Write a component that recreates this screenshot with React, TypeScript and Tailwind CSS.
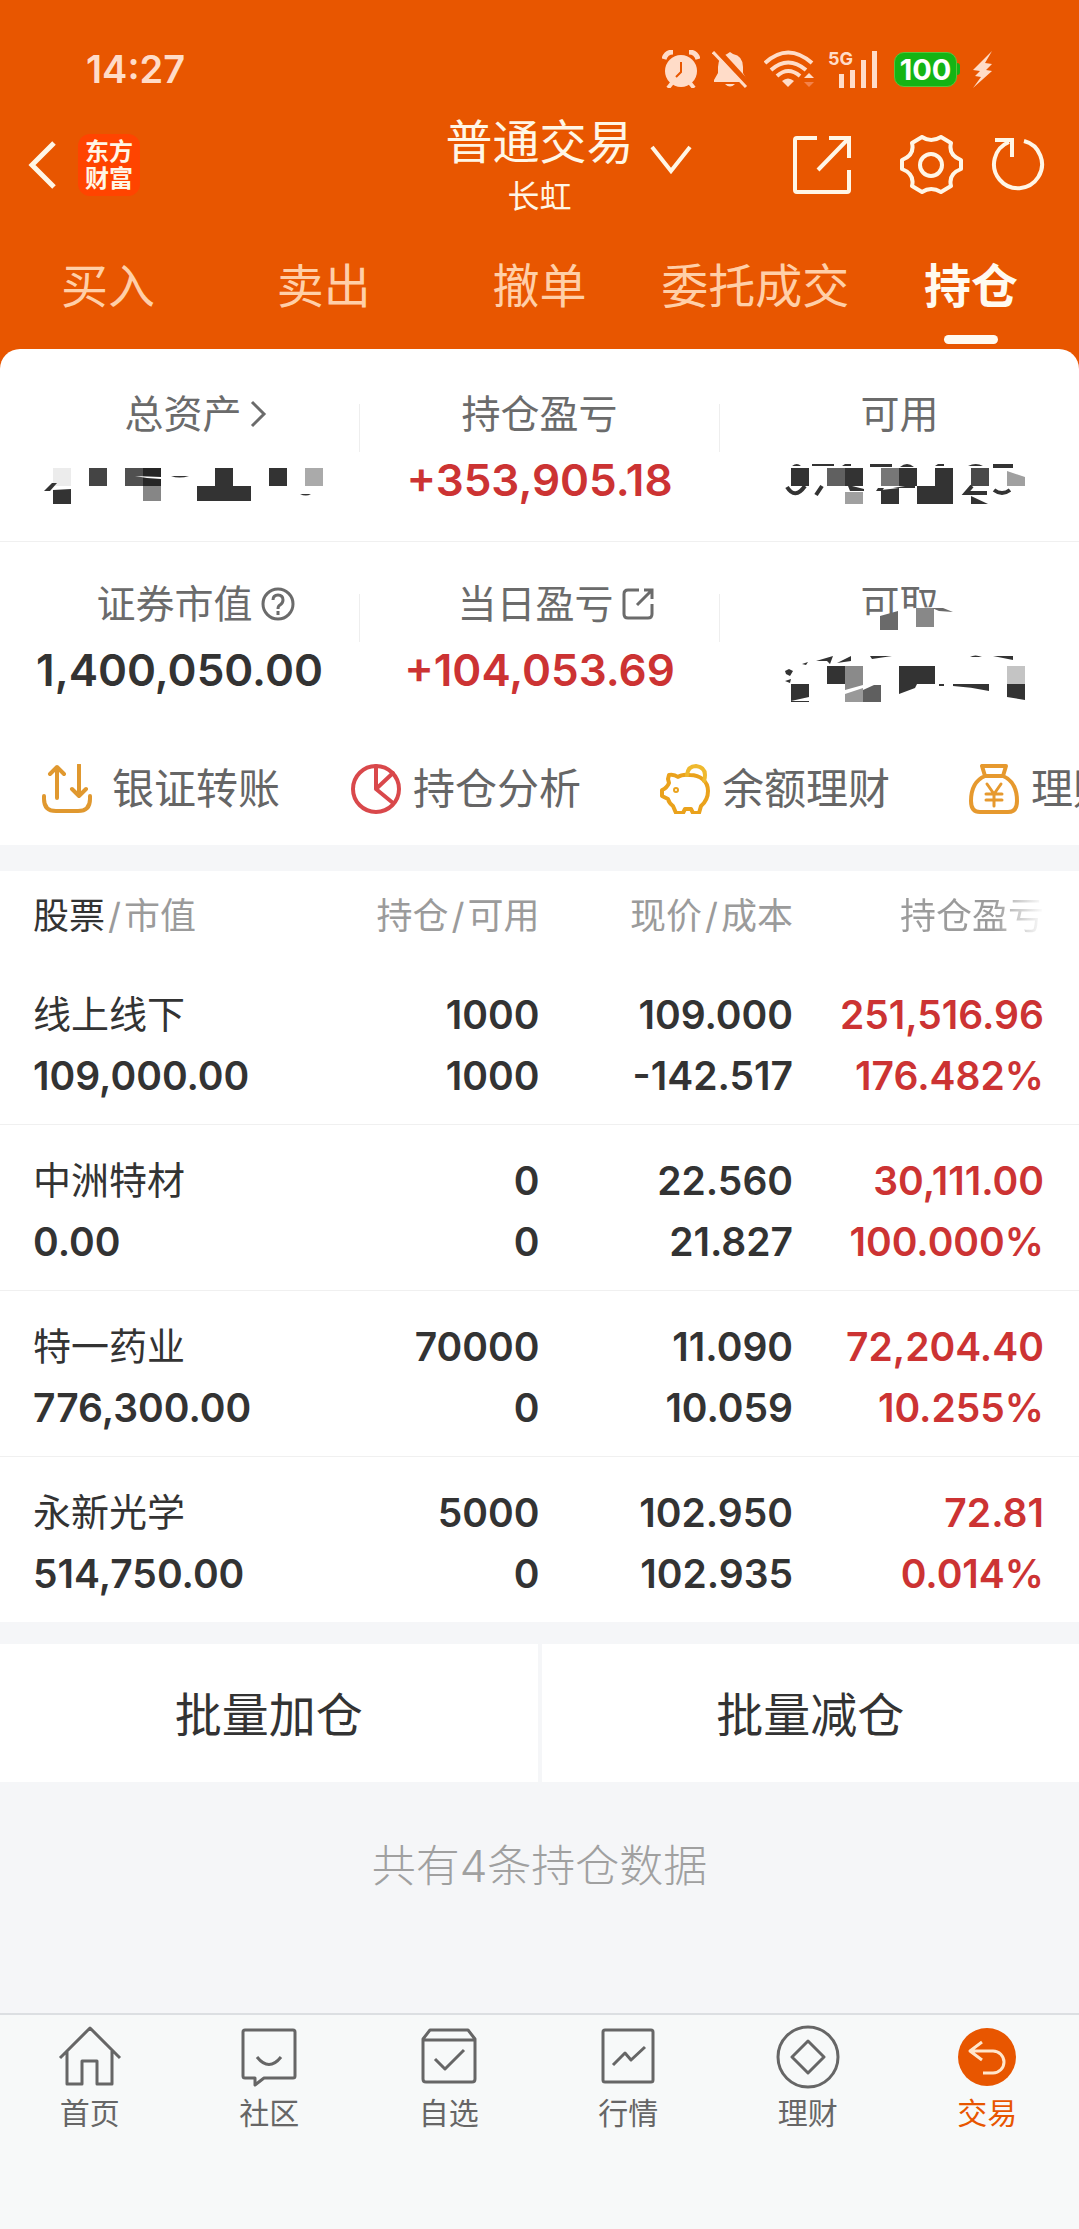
import { useState, type ReactNode } from 'react';
import { clsx } from 'clsx';

const TABS = ['买入', '卖出', '撤单', '委托成交', '持仓'];

const HOLDINGS = [
  { name: '线上线下', value: '109,000.00', qty: '1000', free: '1000', price: '109.000', cost: '-142.517', pnl: '251,516.96', pct: '176.482%' },
  { name: '中洲特材', value: '0.00', qty: '0', free: '0', price: '22.560', cost: '21.827', pnl: '30,111.00', pct: '100.000%' },
  { name: '特一药业', value: '776,300.00', qty: '70000', free: '0', price: '11.090', cost: '10.059', pnl: '72,204.40', pct: '10.255%' },
  { name: '永新光学', value: '514,750.00', qty: '5000', free: '0', price: '102.950', cost: '102.935', pnl: '72.81', pct: '0.014%' },
];

function StatusBar() {
  return (
    <div className="flex h-24 items-center pt-[42px] pr-[86px] pl-[86px] text-[#ffdcc8]">
      <span className="mr-auto text-[38px] leading-none font-semibold">14:27</span>
      <svg width="38" height="38" viewBox="0 0 38 38" fill="currentColor">
        <circle cx="19" cy="21" r="16" />
        <path d="M2 9Q4 2 11 2M36 9Q34 2 27 2" stroke="currentColor" strokeWidth="5" fill="none" />
        <path d="M10 33l-4 5M28 33l4 5" stroke="currentColor" strokeWidth="4" fill="none" />
        <path d="M19 12v10l-5 5" stroke="#e85600" strokeWidth="2" fill="none" />
      </svg>
      <svg className="ml-3" width="36" height="37" viewBox="0 0 36 37" fill="currentColor">
        <path d="M18 1l3 2q10 2 10 13v6l4 7v2H2v-2l4-7v-6Q6 6 15 3zM13 33h10q-5 5-10 0z" />
        <path d="M4-2l34 37" stroke="#e85600" strokeWidth="6" />
        <path d="M1 1l33 35" stroke="currentColor" strokeWidth="3" />
      </svg>
      <svg className="ml-4" width="52" height="38" viewBox="0 0 52 38" fill="none" stroke="currentColor" strokeWidth="4">
        <path d="M1 13Q24-8 48 13M7 20q17-15 35 0M13 26q11-10 23 0" />
        <path d="M24 37l-6-6q6-5 12 0z" fill="currentColor" stroke="none" />
        <path d="M40 28l5-5 5 5z" fill="currentColor" stroke="none" />
        <path d="M40 32h10l-5 5z" fill="#f4824a" stroke="none" />
      </svg>
      <div className="relative ml-3 h-[38px] w-[50px]">
        <span className="absolute top-0 left-0 text-[18px] leading-[18px] font-bold">5G</span>
        <svg className="absolute right-0 bottom-0" width="40" height="38" viewBox="0 0 40 38" fill="currentColor">
          <path d="M1 24h5v14H1zM12 20h5v18h-5zM23 10h5v28h-5zM34 1h5v37h-5z" />
        </svg>
      </div>
      <div className="ml-4 flex items-center">
        <span className="h-[35px] w-[63px] rounded-[10px] border border-[#5ac43a] bg-[#14b414] text-center text-[29px] leading-[33px] font-bold text-white">100</span>
        <span className="h-3 w-[3px] rounded-r bg-[#14b414]" />
      </div>
      <svg className="ml-3" width="21" height="37" viewBox="0 0 21 37" fill="currentColor">
        <path d="M20 0L1 19l7 1-5 5 6 1L1 37l19-17-6-1 6-6-7-1z" />
      </svg>
    </div>
  );
}

function TitleBar() {
  return (
    <div className="grid h-[138px] grid-cols-[1fr_auto_1fr] items-center text-[#fff6e6]">
      <div className="flex items-center gap-[22px] pl-7">
        <button type="button" aria-label="返回">
          <svg width="28" height="48" viewBox="0 0 28 48" fill="none" stroke="currentColor" strokeWidth="5">
            <path d="M26 2L4 24l22 22" />
          </svg>
        </button>
        <a href="#home" className="flex h-[62px] w-[62px] flex-col items-center justify-center rounded-xl bg-[#ff4400] text-[24px] leading-[27px] font-bold">
          <span>东方</span>
          <span>财富</span>
        </a>
      </div>
      <button type="button" className="relative pt-2.5">
        <span className="block text-[47px] leading-[54px]">普通交易</span>
        <span className="block text-[32px] leading-[56px]">长虹</span>
        <svg className="absolute top-10 left-full ml-4" width="42" height="30" viewBox="0 0 42 30" fill="none" stroke="currentColor" strokeWidth="4">
          <path d="M2 2l19 24L40 2" />
        </svg>
      </button>
      <div className="flex items-center justify-end pr-[34px]">
        <button type="button" aria-label="分享">
          <svg width="60" height="60" viewBox="0 0 60 60" fill="none" stroke="currentColor" strokeWidth="4">
            <path d="M25 3H5q-2 0-2 2v50q0 2 2 2h50q2 0 2-2V35M37 3h20v20M57 3L26 35" />
          </svg>
        </button>
        <button type="button" aria-label="设置" className="ml-12">
          <svg width="63" height="60" viewBox="-1 0 63 60" fill="none" stroke="currentColor" strokeWidth="4" strokeLinejoin="round">
            <path d="M21 2Q30 8 40 2L50 8Q47 20 60 25V34Q47 39 50 51L40 57Q30 51 21 57L11 51Q14 39 1 34V25Q14 20 11 8Z" />
            <circle cx="30" cy="30" r="11" />
          </svg>
        </button>
        <button type="button" aria-label="刷新" className="ml-7">
          <svg width="54" height="56" viewBox="0 0 54 56" fill="none" stroke="currentColor" strokeWidth="4">
            <path d="M33 4A24 24 0 1 1 18 5M4 3h17v17" />
          </svg>
        </button>
      </div>
    </div>
  );
}

function Stat({ label, value, red }: { label: ReactNode; value: ReactNode; red?: boolean }) {
  return (
    <div className="flex flex-col items-center">
      <div className="flex h-[60px] items-center text-[39px] leading-[60px] text-[#6b6b6b]">{label}</div>
      <div className={clsx('flex h-[72px] items-center text-[44px] font-semibold', red ? 'text-[#cc3333]' : 'text-[#333333]')}>{value}</div>
    </div>
  );
}

const StatDivider = () => <span className="mt-5 h-12 w-px bg-[#eeeeee]" />;

// Мозаїка поверх прихованих сум, клітинка 18px
function MosaicAssets() {
  return (
    <svg width="288" height="48" viewBox="36 456 288 48" fill="#333333">
      <path d="M53 468h18v18H53z" fill="#ececec" />
      <path d="M53 490l18-1v15H53zM44 491l8-8h5l-7 8z" />
      <path d="M89 468h18v18H89z" fill="#444444" />
      <path d="M125 468h18v18h-18z" fill="#505050" />
      <path d="M143 468h18v18h-18z" fill="#262626" />
      <path d="M143 486h18v15h-18z" fill="#868686" />
      <path d="M135 476l26 1v2l-14-1z" fill="#ffffff" />
      <path d="M171 476h18q-10 3-18 0zM300 494h11q-5 3-11 0z" />
      <path d="M215 468h18v18h18v15h-54v-15h18zM269 468h18v18h-18z" />
      <path d="M305 468h18v18h-18z" fill="#aaaaaa" />
    </svg>
  );
}

function MosaicAvailable() {
  return (
    <svg width="252" height="48" viewBox="774 456 252 48" fill="#333333">
      <path d="M791 468h18v18h-18zM845 468h18v18h-18zM899 468h18v18h-18zM935 468h18v36h-36v-18h18zM881 490l18-2v16h-18zM971 496l17 8h-17z" />
      <path d="M827 468h18v18h-18z" fill="#606060" />
      <path d="M881 468h18v18h-18z" fill="#777777" />
      <path d="M971 468h18v18h-18z" fill="#4a4a4a" />
      <path d="M845 492h18v12h-18zM1007 471l18 6v9h-18z" fill="#a0a0a0" />
      <path d="M792 466q5-4 9 0zM812 464h22v2h-22zM842 466l3-2h6v2zM870 464h22v3h-22zM900 467q7-6 14 0zM935 466l3-2h6v2zM968 466q8-4 15 0zM993 464h20v4h-20zM876 491l2-3h6l-2 3zM848 486l2 5h14v-2l-12-3zM893 488l12-2h10v2z" />
      <path d="M787 487q8 13 18-1M816 495l6-9M972 486l-6 7h21M994 490q8 6 16 0" fill="none" stroke="#333333" strokeWidth="4" />
    </svg>
  );
}

function MosaicWithdrawable() {
  return (
    <svg width="252" height="68" viewBox="774 636 252 68" fill="#333333">
      <path d="M827 666h18v18h-18zM791 684h18v13l-18 4zM899 666h36v18h-18l-2 4-16 6zM953 684h36v7q-18-4-36-5zM1007 684h18v16l-18-3z" />
      <path d="M845 666h18v19l-18 5z" fill="#8a8a8a" />
      <path d="M845 694l18-6v14h-18z" fill="#999999" />
      <path d="M863 690l11-5h7v17h-18z" fill="#5f5f5f" />
      <path d="M1007 666h18v18h-18z" fill="#c4c4c4" />
      <path d="M816 661l17-5-3 8-3-3zM837 663l14-7v5zM870 656h22l-20 3zM993 656h20v4zM970 657q5-3 12 0zM802 664l6-2-2 3zM785 671l4-2 4 2-3 5-4-2zM785 681l6-2-1 4zM939 684h5v2h-5zM791 701h18v1h-18z" />
    </svg>
  );
}

const SHORTCUTS = [
  {
    label: '银证转账',
    icon: (
      <g stroke="#e0982f">
        <path d="M2 32v3q0 12 12 12h22q12 0 12-12v-3" />
        <path d="M15 34V3M8 10l7-7 7 7M37 1v31M30 25l7 7 7-7" />
      </g>
    ),
  },
  {
    label: '持仓分析',
    icon: (
      <g stroke="#d9484b">
        <circle cx="25" cy="25" r="23" />
        <path d="M25 2v23l17-16M25 25l17 14" />
      </g>
    ),
  },
  {
    label: '余额理财',
    icon: (
      <g stroke="#eaa21c">
        <path d="M9 11q5-1 9 2 4-3 12-2c10 0 18 6 18 16q0 9-7 15l-2 7h-6l-2-4h-6l-2 4h-7l-3-7q-4-3-5-7l-6-3V26q5-2 7-7l-1-4z" />
        <path d="M27 11q1-9 9-9 9 1 9 9 0 3-1 6" stroke="#efb92e" />
        <circle cx="16" cy="26" r="1" />
      </g>
    ),
  },
  {
    label: '理财',
    icon: (
      <g stroke="#e6992e">
        <path d="M13 2h24l-3 10H16zM16 12Q2 18 2 37q0 11 9 11h28q9 0 9-11 0-19-14-25" />
        <path d="M18 20l7 10 7-10M17 30h16M17 36h16M25 30v12" strokeWidth="3" />
      </g>
    ),
  },
];

function Shortcuts() {
  return (
    <nav className="flex h-[139px] overflow-hidden pt-[26px] pl-[42px]">
      {SHORTCUTS.map((s, i) => (
        <a key={s.label} href="#service" className={clsx('flex w-[309px] shrink-0 items-center text-[42px] whitespace-nowrap text-[#666666]', i === 0 ? 'gap-5' : 'gap-3')}>
          <svg width="50" height="50" viewBox="0 0 50 50" fill="none" strokeWidth="4" strokeLinejoin="round" strokeLinecap="round">{s.icon}</svg>
          {s.label}
        </a>
      ))}
    </nav>
  );
}

function Summary() {
  return (
    <section className="rounded-t-[20px] bg-white">
      <div className="grid h-[193px] grid-cols-[1fr_1px_1fr_1px_1fr] border-b border-[#f0f0f0] pt-[35px]">
        <Stat
          label={<button type="button" className="flex items-center gap-2 pl-8">总资产
            <svg width="17" height="28" viewBox="0 0 17 28" fill="none" stroke="currentColor" strokeWidth="3"><path d="M2 2l12 12L2 26" /></svg>
          </button>}
          value={<MosaicAssets />}
        />
        <StatDivider />
        <Stat label="持仓盈亏" value="+353,905.18" red />
        <StatDivider />
        <Stat label="可用" value={<MosaicAvailable />} />
      </div>
      <div className="grid grid-cols-[1fr_1px_1fr_1px_1fr] pt-8">
        <Stat
          label={<span className="flex items-center gap-2 pl-8">证券市值
            <svg width="34" height="34" viewBox="0 0 34 34" fill="none" stroke="currentColor" strokeWidth="3">
              <circle cx="17" cy="17" r="15" />
              <path d="M12 13q0-5 5-5t5 5q0 3-3 5-2 1-2 4M17 24v4" />
            </svg>
          </span>}
          value="1,400,050.00"
        />
        <StatDivider />
        <Stat
          label={<button type="button" className="flex items-center gap-2 pl-8">当日盈亏
            <svg width="32" height="32" viewBox="0 0 32 32" fill="none" stroke="currentColor" strokeWidth="3">
              <path d="M17 2H6Q2 2 2 6v20q0 4 4 4h20q4 0 4-4V16M22 2h8v9M30 2L15 17" />
            </svg>
          </button>}
          value="+104,053.69"
          red
        />
        <StatDivider />
        <Stat
          label={<span className="relative">可取
            <svg className="absolute top-[33px] left-0" width="96" height="26" viewBox="861 607 96 26" fill="#6a6a6a">
              <path d="M861 618h20v15h76v-26h-22l-36 2v6l-18 3z" fill="#ffffff" />
              <path d="M881 616l18-5v19h-18z" />
              <path d="M917 608h18v19h-18z" fill="#888888" />
              <path d="M933 608h11l10 4-14-1z" />
            </svg>
          </span>}
          value={<MosaicWithdrawable />}
        />
      </div>
      <Shortcuts />
    </section>
  );
}

function Pair({ top, bottom }: { top: string; bottom: string }) {
  return (
    <>
      <div>{top}</div>
      <div>{bottom}</div>
    </>
  );
}

function Holdings() {
  return (
    <table className="w-full table-fixed bg-white text-right text-[39px] leading-[61px] font-semibold text-[#333333]">
      <colgroup>
        <col className="w-[25%]" />
        <col className="w-[25%]" />
        <col className="w-[23.5%]" />
        <col />
      </colgroup>
      <thead>
        <tr className="h-[88px] text-[36px] whitespace-nowrap text-[#9b9b9b]">
          <th className="pt-0.5 pl-[33px] text-left font-normal"><span className="text-[#333333]">股票</span><span className="mx-[3px]">/</span>市值</th>
          <th className="pt-0.5 font-normal">持仓<span className="mx-[3px]">/</span>可用</th>
          <th className="pt-0.5 font-normal">现价<span className="mx-[3px]">/</span>成本</th>
          <th className="pt-0.5 pr-[35px] font-normal"><span className="bg-linear-to-r from-[#9b9b9b] from-65% to-transparent bg-clip-text text-transparent">持仓盈亏</span></th>
        </tr>
      </thead>
      <tbody>
        {HOLDINGS.map(h => (
          <tr key={h.name} className="border-b border-[#f0f0f0] last:border-b-0">
            <td className="pt-[25px] pb-[18px] pl-[33px] text-left">
              <div className="text-[38px] font-normal">{h.name}</div>
              <div>{h.value}</div>
            </td>
            <td className="pt-[25px] pb-[18px]"><Pair top={h.qty} bottom={h.free} /></td>
            <td className="pt-[25px] pb-[18px]"><Pair top={h.price} bottom={h.cost} /></td>
            <td className="pt-[25px] pr-[35px] pb-[18px] text-[#cc3333]"><Pair top={h.pnl} bottom={h.pct} /></td>
          </tr>
        ))}
      </tbody>
    </table>
  );
}

const NAV = [
  { label: '首页', icon: <path d="M2 33L32 3l30 30M9 26v33h15V36h15v23h15V26" /> },
  { label: '社区', icon: <path d="M8 5h48q2 0 2 2v44q0 2-2 2H27l-9 7v-7H8q-2 0-2-2V7q0-2 2-2zM20 32q12 15 24 0" /> },
  { label: '自选', icon: <path d="M6 14l7-9h38l7 9v40q0 3-3 3H9q-3 0-3-3zM6 15h52M18 34l10 10 19-19" /> },
  { label: '行情', icon: <path d="M9 5h46q2 0 2 2v48q0 2-2 2H9q-2 0-2-2V7q0-2 2-2zM17 40l12-12 6 7 14-13" /> },
  { label: '理财', icon: <path d="M32 2a30 30 0 1 0 0 60 30 30 0 0 0 0-60zM32 16l16 16-16 16-16-16z" /> },
  { label: '交易', icon: <g><circle cx="32" cy="32" r="29" fill="#e85600" stroke="none" /><path d="M27 17L15 26l12 9M15 26h23a11 11 0 0 1 0 22H28" stroke="#ffe6cc" /></g> },
];

function BottomNav() {
  return (
    <nav className="grid h-[216px] grid-cols-6 border-t-2 border-[#dcdfe2] bg-[#f7f9f9] pt-2.5 pr-0.5">
      {NAV.map(n => (
        <a key={n.label} href="#nav" className={clsx('flex flex-col items-center text-[30px] leading-[48px]', n.label === '交易' ? 'text-[#e85600]' : 'text-[#666666]')}>
          <svg width="64" height="64" viewBox="0 0 64 64" fill="none" stroke="currentColor" strokeWidth="3" strokeLinejoin="round">{n.icon}</svg>
          {n.label}
        </a>
      ))}
    </nav>
  );
}

export default function App() {
  const [tab, setTab] = useState('持仓');

  return (
    <div className="flex min-h-screen flex-col bg-[#f5f6f8] font-[Inter,'Noto_Sans_CJK_SC',sans-serif]">
      <div className="bg-[#e85600]">
        <header>
          <StatusBar />
          <TitleBar />
          <div className="grid h-[115px] grid-cols-5">
            {TABS.map(t => (
              <button
                key={t}
                type="button"
                onClick={() => setTab(t)}
                className={clsx('relative pb-3 text-[47px] leading-[103px] whitespace-nowrap', t === tab ? 'font-bold text-[#fffaf0]' : 'text-[#ffcfa8]')}
              >
                {t}
                {t === tab && <span className="absolute bottom-[5px] left-1/2 h-[9px] w-[54px] -translate-x-1/2 rounded-full bg-[#fffaf0]" />}
              </button>
            ))}
          </div>
        </header>
        <Summary />
      </div>

      <div className="mt-[26px]">
        <Holdings />
      </div>

      <div className="mt-[22px] grid grid-cols-2 gap-1 text-[47px] text-[#333333]">
        <button type="button" className="h-[138px] bg-white pt-1">批量加仓</button>
        <button type="button" className="h-[138px] bg-white pt-1">批量减仓</button>
      </div>

      <p className="mb-auto pt-[54px] text-center text-[44px] leading-[60px] font-light text-[#a0a0a0]">共有4条持仓数据</p>

      <BottomNav />
    </div>
  );
}
